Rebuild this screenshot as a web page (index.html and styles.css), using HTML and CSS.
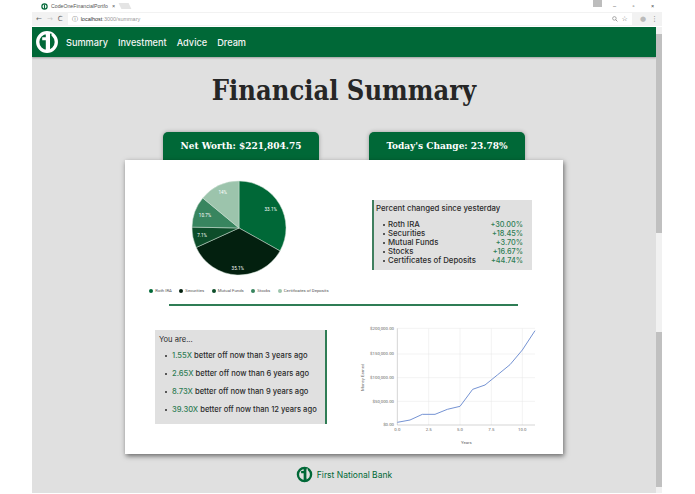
FILE: index.html
```html
<!DOCTYPE html>
<html lang="en">
<head>
  <meta charset="UTF-8">
  <title>CodeOne Financial Portfolio</title>
  <link rel="stylesheet" href="styles.css">
</head>
<body>
<div class="window">
  <!-- browser chrome -->
  <div class="tabbar">
    <div class="tab">
      <svg class="tab-icon" viewBox="0 0 24 24"><circle cx="12" cy="12" r="9" fill="none" stroke="#006837" stroke-width="4"/><rect x="10" y="5" width="4" height="15" fill="#006837"/></svg>
      <span class="tab-title">CodeOneFinancialPortfo</span>
      <span class="tab-close">×</span>
    </div>
    <div class="tab-new"></div>
    <div class="win-controls">
      <span class="win-user"></span>
      <span class="win-btn">–</span>
      <span class="win-btn">▫</span>
      <span class="win-btn">×</span>
    </div>
  </div>
  <div class="toolbar">
    <span class="tool">←</span>
    <span class="tool faint">→</span>
    <span class="tool">C</span>
    <div class="address">
      <span class="info">ⓘ</span>
      <span class="host">localhost</span><span class="path">:3000/summary</span>
      <div class="address-icons">
        <svg viewBox="0 0 10 10"><circle cx="4" cy="4" r="3" fill="none" stroke="#777"/><path d="M6.2 6.2L9 9" stroke="#777" stroke-width="1.2"/></svg>
        <span>☆</span>
      </div>
    </div>
    <span class="tool ext">●</span>
    <span class="tool">⋮</span>
  </div>

  <div class="viewport">
    <div class="page">
      <nav class="navbar">
        <svg class="nav-logo" viewBox="0 0 40 40"><circle cx="20" cy="20" r="15.5" fill="none" stroke="#fff" stroke-width="5.5"/><path d="M18 4h7v32h-7V17h-6v-5h6z" fill="#fff"/><rect x="25" y="6" width="2.5" height="23" fill="#006837"/></svg>
        <a>Summary</a>
        <a>Investment</a>
        <a>Advice</a>
        <a>Dream</a>
      </nav>

      <h1>Financial Summary</h1>

      <div class="badges">
        <div class="badge">Net Worth: $221,804.75</div>
        <div class="badge">Today's Change: 23.78%</div>
      </div>

      <div class="card">
        <div class="card-top">
          <div class="pie-col">
            <svg class="pie" viewBox="-114 -68 228 128">
              <g stroke="#cfe0d5" stroke-width="0.5">
                <path d="M0 0V-47A47 47 0 0 1 41.04 22.91Z" fill="#006837"/>
                <path d="M0 0L41.04 22.91A47 47 0 0 1 -42.77 19.48Z" fill="#03200f"/>
                <path d="M0 0L-42.77 19.48A47 47 0 0 1 -46.99 -.89Z" fill="#0d4d2a"/>
                <path d="M0 0L-46.99 -.89A47 47 0 0 1 -36.21 -29.96Z" fill="#38855f"/>
                <path d="M0 0L-36.21 -29.96A47 47 0 0 1 0 -47Z" fill="#9cc4ac"/>
              </g>
              <g class="pie-labels">
                <text x="31.7" y="-17">33.1%</text>
                <text x="-1.3" y="42">35.1%</text>
                <text x="-37" y="9">7.1%</text>
                <text x="-34" y="-11.5">10.7%</text>
                <text x="-16.3" y="-34">14%</text>
              </g>
            </svg>
            <div class="legend">
              <span><i class="c1"></i>Roth IRA</span>
              <span><i class="c2"></i>Securities</span>
              <span><i class="c3"></i>Mutual Funds</span>
              <span><i class="c4"></i>Stocks</span>
              <span><i class="c5"></i>Certificates of Deposits</span>
            </div>
          </div>
          <div class="changes">
            <p>Percent changed since yesterday</p>
            <ul>
              <li><span>Roth IRA</span><b>+30.00%</b></li>
              <li><span>Securities</span><b>+18.45%</b></li>
              <li><span>Mutual Funds</span><b>+3.70%</b></li>
              <li><span>Stocks</span><b>+16.67%</b></li>
              <li><span>Certificates of Deposits</span><b>+44.74%</b></li>
            </ul>
          </div>
        </div>

        <hr class="divider">

        <div class="card-bottom">
          <div class="better">
            <p>You are...</p>
            <ul>
              <li><b>1.55X</b> better off now than 3 years ago</li>
              <li><b>2.65X</b> better off now than 6 years ago</li>
              <li><b>8.73X</b> better off now than 9 years ago</li>
              <li><b>39.30X</b> better off now than 12 years ago</li>
            </ul>
          </div>
          <svg class="line-chart" viewBox="0 0 600 390">
            <g stroke="#e6e6e6" stroke-width="1.5">
              <path d="M142 25H555M142 102H555M142 173H555M142 244H555"/>
              <path d="M236 25V315M330 25V315M424 25V315M517 25V315"/>
            </g>
            <path d="M142 25V315H555" fill="none" stroke="#aaa" stroke-width="1.5"/>
            <polyline points="142,307 180,300 217,283 255,283 292,268 330,259 368,208 405,195 442,165 480,134 517,90 555,32" fill="none" stroke="#7593d3" stroke-width="3"/>
            <g class="axis">
              <text x="132" y="30" text-anchor="end">$200,000.00</text>
              <text x="132" y="106" text-anchor="end">$150,000.00</text>
              <text x="132" y="177" text-anchor="end">$100,000.00</text>
              <text x="132" y="248" text-anchor="end">$50,000.00</text>
              <text x="132" y="319" text-anchor="end">$0.00</text>
              <text x="142" y="333" text-anchor="middle">0.0</text>
              <text x="236" y="333" text-anchor="middle">2.5</text>
              <text x="330" y="333" text-anchor="middle">5.0</text>
              <text x="424" y="333" text-anchor="middle">7.5</text>
              <text x="517" y="333" text-anchor="middle">10.0</text>
              <text x="349" y="373" text-anchor="middle">Years</text>
              <text transform="translate(43 172) rotate(-90)" text-anchor="middle">Money Earned</text>
            </g>
          </svg>
        </div>
      </div>

      <footer class="footer">
        <svg class="foot-logo" viewBox="0 0 40 40"><circle cx="20" cy="20" r="15.5" fill="none" stroke="#006837" stroke-width="5.5"/><path d="M18 4h7v32h-7V17h-6v-5h6z" fill="#006837"/><rect x="25" y="6" width="2.5" height="23" fill="#e0e0e0"/></svg>
        <span>First National Bank</span>
      </footer>
    </div>
    <div class="scrollbar">
      <span class="thumb thumb-top"></span>
      <span class="thumb thumb-bottom"></span>
    </div>
  </div>
</div>
</body>
</html>
```

FILE: styles.css
```css
/* page and window */
html, body {
  margin: 0;
  height: 100%;
  overflow: hidden;
  background: #fff;
}
body {
  font-family: Inter, "Noto Sans", sans-serif;
  color: #2b2b2b;
}
.window {
  width: 630px;
  margin-left: 32px;
}

/* browser chrome */
.tabbar {
  height: 12px;
  display: flex;
  align-items: center;
  font-family: "Liberation Sans", sans-serif;
  font-size: 5.5px;
  color: #555;
}
.tab {
  width: 79px;
  height: 12px;
  margin-left: 7px;
  display: flex;
  align-items: center;
  gap: 3px;
  box-sizing: border-box;
  padding-left: 2px;
}
.tab-icon {
  width: 7px;
  height: 7px;
}
.tab-title {
  width: 58px;
  font-size: 5.2px;
  white-space: nowrap;
}
.tab-new {
  width: 10px;
  height: 6px;
  margin-left: 2px;
  background: #e4e4e4;
  transform: skewX(25deg);
}
.win-controls {
  margin-left: auto;
  display: flex;
  align-items: center;
  color: #444;
}
.win-user {
  width: 9px;
  height: 7px;
  background: #bdbdbd;
  margin: -5px 3px 0 0;
}
.win-btn {
  width: 19px;
  text-align: center;
}
.toolbar {
  height: 14px;
  background: #f2f2f2;
  display: flex;
  align-items: center;
  gap: 5px;
  padding: 0 4px;
  font-family: "DejaVu Sans", sans-serif;
  font-size: 7px;
  color: #666;
}
.tool.faint {
  color: #c8c8c8;
}
.tool.ext {
  color: #bbb;
  margin-left: 3px;
}
.address {
  flex: 1;
  height: 12px;
  background: #fff;
  display: flex;
  align-items: center;
  padding: 0 4px;
  font-family: "Liberation Sans", sans-serif;
  font-size: 5.5px;
}
.info {
  margin-right: 3px;
}
.host {
  color: #333;
}
.path {
  color: #999;
}
.address-icons {
  margin-left: auto;
  display: flex;
  align-items: center;
  gap: 4px;
  font-family: "DejaVu Sans", sans-serif;
  font-size: 7px;
}
.address-icons svg {
  width: 6px;
  height: 6px;
}

/* viewport with page and scrollbar */
.viewport {
  display: flex;
  height: 466px;
  margin-top: 1px;
  overflow: hidden;
}
.page {
  width: 624px;
  background: #e0e0e0;
}
.scrollbar {
  width: 6px;
  background: #f1f1f1;
  padding-top: 7px;
}
.thumb {
  display: block;
  background: #c0c0c0;
}
.thumb-top {
  height: 199px;
}
.thumb-bottom {
  height: 155px;
  margin-top: 99px;
}

/* navbar */
.navbar {
  height: 30px;
  background: #006837;
  display: flex;
  align-items: center;
  padding-left: 3px;
  gap: 10px;
  box-shadow: 0 1px 2px rgba(0, 0, 0, 0.3);
}
.nav-logo {
  width: 24px;
  height: 24px;
  margin-right: -3px;
}
.navbar a {
  color: #f4f4f4;
  font-size: 9.2px;
  font-weight: 500;
}

/* heading and badges */
h1 {
  margin: 15px 0 0;
  height: 38px;
  font-family: "DejaVu Serif Condensed", "DejaVu Serif", serif;
  font-stretch: condensed;
  font-size: 27px;
  line-height: 38px;
  font-weight: 700;
  color: #262626;
  text-align: center;
}
.badges {
  display: flex;
  justify-content: center;
  gap: 50px;
  margin-top: 22px;
}
.badge {
  width: 156px;
  height: 28px;
  line-height: 28px;
  background: #006837;
  border-radius: 5px 5px 0 0;
  color: #fff;
  font-family: "DejaVu Serif Condensed", "DejaVu Serif", serif;
  font-stretch: condensed;
  font-size: 10px;
  font-weight: 700;
  text-align: center;
  box-shadow: 0 0 4px rgba(0, 0, 0, 0.3);
}

/* main card */
.card {
  position: relative;
  width: 438px;
  height: 294px;
  margin: 0 auto;
  background: #fff;
  box-shadow: 1px 2px 5px rgba(0, 0, 0, 0.55);
}
.card-top {
  display: flex;
  height: 144px;
}
.pie-col {
  width: 228px;
}
.pie {
  display: block;
  width: 228px;
  height: 128px;
}
.pie-labels text {
  fill: #fff;
  font-family: Roboto, sans-serif;
  font-size: 4.6px;
  text-anchor: middle;
}
.legend {
  display: flex;
  justify-content: center;
  gap: 7.5px;
  font-family: Roboto, sans-serif;
  font-size: 4.3px;
  color: #555;
  line-height: 6px;
}
.legend span {
  display: flex;
  align-items: center;
  gap: 2px;
  white-space: nowrap;
}
.legend i {
  width: 4px;
  height: 4px;
  border-radius: 50%;
}
.c1 { background: #006837; }
.c2 { background: #03200f; }
.c3 { background: #0d4d2a; }
.c4 { background: #38855f; }
.c5 { background: #9cc4ac; }

/* percent changed panel */
.changes {
  box-sizing: border-box;
  width: 160px;
  height: 70px;
  margin: 40px 0 0 19px;
  padding: 3px 9px 0 2px;
  background: #e0e0e0;
  border-left: 2px solid #3f7f5f;
  font-size: 7.8px;
  font-weight: 500;
}
.changes p {
  margin: 0;
  line-height: 10px;
}
.changes ul {
  margin: 7px 0 0;
  padding: 0;
  list-style: none;
}
.changes li {
  display: flex;
  justify-content: space-between;
  line-height: 9.1px;
  padding-left: 12px;
  position: relative;
}
.changes li::before,
.better li::before {
  content: "";
  position: absolute;
  width: 2px;
  height: 2px;
  border-radius: 50%;
  background: #2b2b2b;
  top: 3.5px;
}
.changes li::before {
  left: 7px;
}
.changes b {
  font-size: 7.3px;
  font-weight: 500;
  color: #2f7d55;
}

.divider {
  width: 349px;
  height: 1.5px;
  margin: 0 0 0 44px;
  border: 0;
  background: #2f7d55;
}

/* bottom row */
.card-bottom {
  display: flex;
}
.better {
  box-sizing: border-box;
  width: 172px;
  height: 94px;
  margin: 24px 0 0 30px;
  padding: 5px 4px 0;
  background: #e0e0e0;
  border-right: 2px solid #2f7d55;
  font-size: 7.6px;
}
.better p {
  margin: 0;
  line-height: 10px;
}
.better ul {
  margin: 2px 0 0;
  padding: 0;
  list-style: none;
}
.better li {
  position: relative;
  height: 18px;
  line-height: 18px;
  padding-left: 13px;
  white-space: nowrap;
  font-weight: 500;
}
.better li::before {
  left: 6px;
  top: 8px;
}
.better b {
  font-weight: 500;
  color: #2f7d55;
}
.line-chart {
  width: 200px;
  height: 130px;
  margin: 14px 0 0 23px;
}
.axis text {
  font-family: Roboto, sans-serif;
  font-size: 13px;
  fill: #666;
}

/* footer logo */
.footer {
  display: flex;
  justify-content: center;
  align-items: center;
  gap: 4px;
  margin-top: 12px;
  color: #006837;
  font-size: 8.5px;
}
.foot-logo {
  width: 17px;
  height: 17px;
}
```
